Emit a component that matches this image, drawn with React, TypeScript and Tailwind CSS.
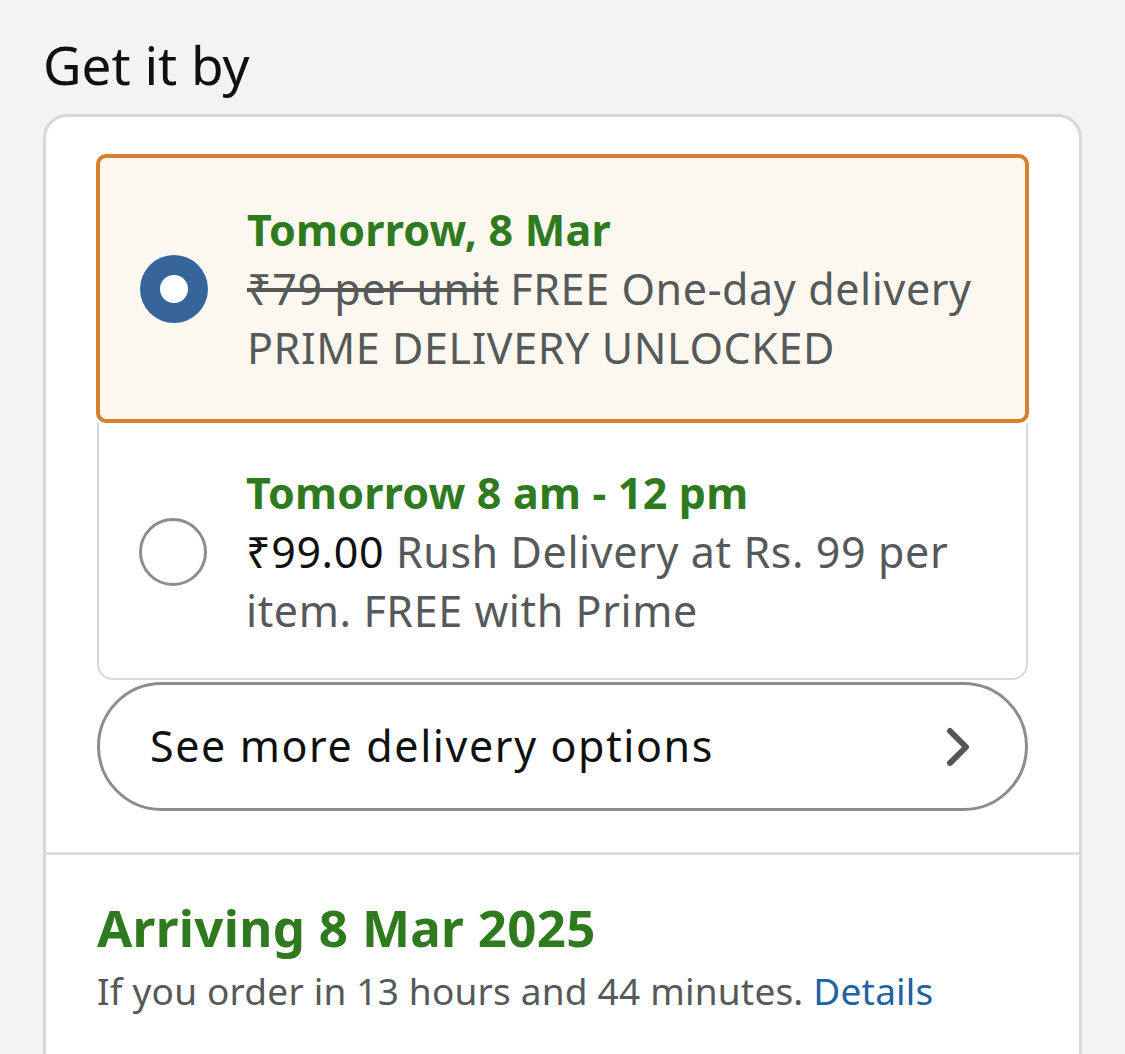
function Radio({ checked }: { checked: boolean }) {
  if (checked) {
    return (
      <div className="w-[68px] h-[68px] rounded-full bg-[#36659b] flex items-center justify-center shrink-0">
        <div className="w-[28px] h-[28px] rounded-full bg-white" />
      </div>
    );
  }
  return <div className="w-[68px] h-[68px] rounded-full border-[3px] border-[#8d8d8d] bg-white shrink-0" />;
}

export default function App() {
  return (
    <div
      className="min-h-[1054px] bg-[#f3f3f3] overflow-hidden"
      style={{ fontFamily: '"Noto Sans", "Open Sans", sans-serif' }}
    >
      <div className="pt-[34px] pl-[43px] text-[53px] leading-[62px] text-[#0f1111]">Get it by</div>

      <div className="mt-[18px] mx-[43px] bg-white border-[3px] border-[#d5d9d9] rounded-[24px] h-[1000px]">
        <div className="px-[50px] pt-[37px] pb-[41px]">
          {/* Selected option */}
          <div className="flex items-center gap-[39px] border-4 border-[#d5812f] bg-[#fcf8f0] rounded-[10px] pl-[40px] pr-[20px] py-[42px]">
            <Radio checked />
            <div className="text-[43px] leading-[59px] tracking-[0.6px] text-[#565959]">
              <div className="font-bold text-[#2f7a1f] tracking-[0.2px]">Tomorrow, 8 Mar</div>
              <div>
                <span className="line-through">₹79 per unit</span> FREE One-day delivery
              </div>
              <div>PRIME DELIVERY UNLOCKED</div>
            </div>
          </div>

          {/* Unselected option */}
          <div className="flex items-center gap-[39px] border-2 border-t-0 border-[#d5d9d9] rounded-b-[16px] mx-[1px] pl-[40px] pr-[20px] pt-[40px] pb-[38px]">
            <Radio checked={false} />
            <div className="text-[43px] leading-[59px] tracking-[0.6px] text-[#565959]">
              <div className="font-bold text-[#2f7a1f] tracking-[0.2px]">Tomorrow 8 am - 12 pm</div>
              <div>
                <span className="text-[#0f1111]">₹99.00</span> Rush Delivery at Rs. 99 per item. FREE with Prime
              </div>
            </div>
          </div>

          {/* See more */}
          <div className="mt-[2px] mx-[1px] h-[129px] border-[3px] border-[#8d8d8d] rounded-full flex items-center justify-between pl-[50px] pr-[52px]">
            <span className="text-[43px] tracking-[1.6px] text-[#0f1111]">See more delivery options</span>
            <svg width="28" height="42" viewBox="0 0 28 42" fill="none">
              <path d="M5 5 L21 21 L5 37" stroke="#555555" strokeWidth="6" strokeLinecap="round" strokeLinejoin="round" />
            </svg>
          </div>
        </div>

        <div className="border-t-[3px] border-[#dcdfdf] px-[51px] pt-[38px]">
          <div className="text-[51px] leading-[68px] font-bold tracking-[0.3px] text-[#2f7a1f]">Arriving 8 Mar 2025</div>
          <div className="text-[37px] leading-[60px] tracking-[0.2px] text-[#565959]">
            If you order in 13 hours and 44 minutes. <span className="text-[#2162a1]">Details</span>
          </div>
        </div>
      </div>
    </div>
  );
}
